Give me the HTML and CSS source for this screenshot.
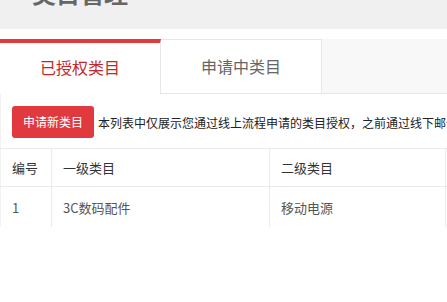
FILE: index.html
```html
<!DOCTYPE html>
<html lang="zh-CN">
<head>
<meta charset="utf-8">
<title>类目管理</title>
<link rel="stylesheet" href="styles.css">
</head>
<body>
<div class="page">
  <div class="header"><h1 class="title">类目管理</h1></div>
  <div class="tabs">
    <div class="tab active">已授权类目</div>
    <div class="tab">申请中类目</div>
    <div class="tab-fill"></div>
  </div>
  <div class="content">
    <div class="toolbar">
      <button class="btn">申请新类目</button>
      <span class="notice">本列表中仅展示您通过线上流程申请的类目授权，之前通过线下邮件申请的类目授权请联系您的对接人员查询</span>
    </div>
    <table class="grid">
      <thead>
        <tr><th class="c-no">编号</th><th class="c-first">一级类目</th><th class="c-second">二级类目</th><th class="c-op"></th></tr>
      </thead>
      <tbody>
        <tr><td>1</td><td>3C数码配件</td><td>移动电源</td><td></td></tr>
      </tbody>
    </table>
  </div>
</div>
</body>
</html>
```
FILE: styles.css
```css
html, body {
  margin: 0;
  padding: 0;
  background: #fff;
  overflow: hidden;
}
body {
  font-family: "Noto Sans CJK SC", "Noto Sans", "Liberation Sans", sans-serif;
  color: #333;
}
.page {
  width: 720px;
}
.header {
  height: 29px;
  background: #f0f0f0;
  overflow: hidden;
}
.title {
  margin: -19px 0 0 32px;
  font-size: 24px;
  line-height: 24px;
  font-weight: 700;
  color: #666;
}
.tabs {
  display: flex;
  margin-top: 10px;
  height: 55px;
  background: #f8f8f8;
  border-bottom: 1px solid #e6e6e6;
  box-sizing: border-box;
}
.tab {
  width: 161px;
  box-sizing: border-box;
  background: #fff;
  border-top: 1px solid #e6e6e6;
  border-right: 1px solid #e6e6e6;
  display: flex;
  align-items: center;
  justify-content: center;
  font-size: 16px;
  color: #666;
  padding-bottom: 2px;
}
.tab.active {
  border-top: 4px solid #e0393e;
  color: #c0282c;
  height: 55px;
  padding-bottom: 3px;
}
.tab + .tab {
  width: 161px;
  border-left: none;
}
.tab-fill {
  flex: 1;
}
.content {
  border-left: 1px solid #f2f2f2;
}
.toolbar {
  display: flex;
  align-items: center;
  padding: 12px 0 10px 11px;
  white-space: nowrap;
}
.btn {
  height: 32px;
  padding: 0 11px;
  border: none;
  border-radius: 3px;
  background: #e0393e;
  color: #fff;
  font-family: inherit;
  font-size: 12px;
  line-height: 32px;
}
.notice {
  margin-left: 4px;
  font-size: 12px;
  color: #222;
}
.grid {
  border-collapse: collapse;
  font-size: 13px;
  margin-left: -1px;
}
.grid th, .grid td {
  text-align: left;
  padding: 0 11px;
  border-left: 1px solid #eaeaea;
  white-space: nowrap;
}
.grid th:first-child, .grid td:first-child {
  border-left: 1px solid #f2f2f2;
}
.grid th {
  height: 37px;
  font-weight: 400;
  color: #333;
  border-top: 1px solid #eaeaea;
  border-bottom: 1px solid #eaeaea;
}
.grid td {
  height: 40px;
  color: #555;
}
.c-no { width: 28px; }
.c-first { width: 195px; }
.c-second { width: 153px; }
.c-op { width: 120px; }
```
